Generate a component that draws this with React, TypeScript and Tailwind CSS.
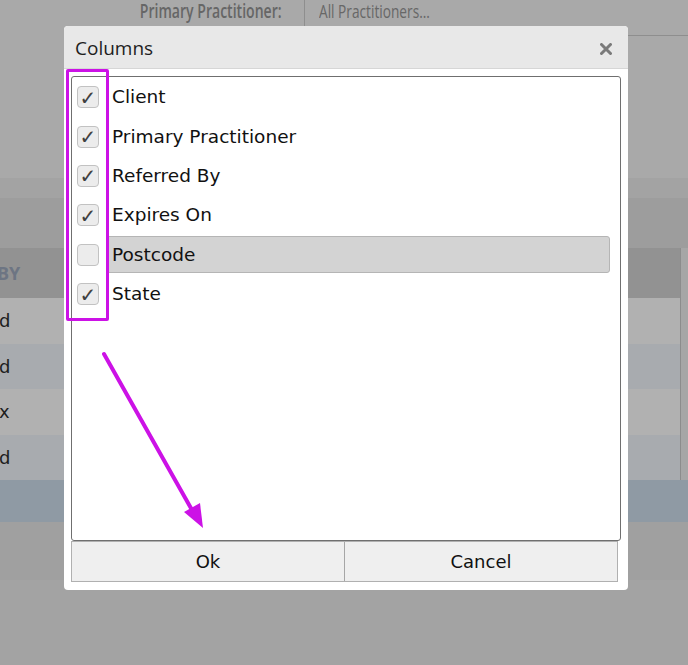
import * as React from "react";

type Column = {
  label: string;
  checked: boolean;
  active?: boolean;
};

const columns: Column[] = [
  { label: "Client", checked: true },
  { label: "Primary Practitioner", checked: true },
  { label: "Referred By", checked: true },
  { label: "Expires On", checked: true },
  { label: "Postcode", checked: false, active: true },
  { label: "State", checked: true },
];

const tableRows = [
  { cell: "d", bg: "bg-[#b1b1b1]" },
  { cell: "d", bg: "bg-[#a8abaf]" },
  { cell: "x", bg: "bg-[#b1b1b1]" },
  { cell: "d", bg: "bg-[#a8abaf]" },
];

function Checkbox({ checked }: { checked: boolean }) {
  return (
    <span className="flex h-[22px] w-[22px] shrink-0 items-center justify-center rounded-[4px] border border-[#c2c2c2] bg-[#ececec] pt-[1px] text-[20px] leading-none text-[#404040]">
      {checked ? "✓" : ""}
    </span>
  );
}

function Backdrop() {
  return (
    <div className="flex h-[665px] w-[688px] flex-col bg-[#a9a9a9] font-['Open_Sans',sans-serif]">
      {/* filter bar */}
      <div className="flex h-[36px] items-stretch">
        <div className="flex w-[304px] items-start justify-end pr-[22px] leading-[22px] text-[19px] font-semibold text-[#666]">
          <span className="origin-right scale-x-[0.74] whitespace-nowrap">Primary Practitioner:</span>
        </div>
        <div className="flex flex-1 items-start border-l border-b border-[#8e8e8e] pl-[14px] leading-[22px] text-[19px] text-[#676767]">
          <span className="origin-left scale-x-[0.72] whitespace-nowrap">All Practitioners...</span>
        </div>
      </div>
      <div className="h-[142px]" />
      <div className="h-[20px] bg-[#a3a3a3]" />
      <div className="h-[50px] bg-[#9d9d9d]" />

      {/* table behind the dialog */}
      <div className="flex">
        <div className="flex-1">
          <div className="flex h-[50px] items-center bg-[#929292] text-[18px] font-bold text-[#6d7583]">
            <span className="-ml-[3px]">BY</span>
          </div>
          {tableRows.map((r, i) => (
            <div
              key={i}
              className={`flex h-[45.5px] items-center text-[18px] text-[#1d1d1d] font-['DejaVu_Sans',sans-serif] ${r.bg}`}
            >
              <span className="-ml-[1px]">{r.cell}</span>
            </div>
          ))}
        </div>
        <div className="w-[8px] border-l border-[#8c8c8c] bg-[#a6a6a6]" />
      </div>
      <div className="h-[42px] bg-[#8f9aa4]" />
      <div className="h-[58px] bg-[#a0a0a0]" />
      <div className="flex-1 bg-[#a3a3a3]" />
    </div>
  );
}

function ColumnsDialog() {
  return (
    <div className="absolute left-[64px] top-[26px] flex h-[564px] w-[564px] flex-col overflow-hidden rounded-[4px] bg-white">
      <div className="flex h-[43px] shrink-0 items-center justify-between border-b border-[#d6d6d6] bg-[#e8e8e8] pl-[11px] pr-[16px]">
        <span className="pt-[2px] font-['Open_Sans',sans-serif] text-[19px] text-[#1e1e1e]">
          Columns
        </span>
        <svg width="12" height="12" viewBox="0 0 12 12" className="mt-[3px]">
          <path
            d="M1.5 1.5 L10.5 10.5 M10.5 1.5 L1.5 10.5"
            stroke="#7a7a7a"
            strokeWidth="3"
            strokeLinecap="round"
          />
        </svg>
      </div>

      <div className="flex flex-1 flex-col px-[7px] pt-[7px] pb-[8px] font-['DejaVu_Sans',sans-serif]">
        <div className="flex h-[465px] flex-col rounded-[3px] border border-[#6f6f6f] bg-white pr-[10px] pl-[5px]">
          {columns.map((c) => (
            <div key={c.label} className="flex h-[39.4px] items-center gap-[7px] pt-[1px]">
              <Checkbox checked={c.checked} />
              <div
                className={`flex h-[37px] flex-1 items-center rounded-[3px] pl-[5px] text-[18.5px] text-[#111] ${
                  c.active ? "border border-[#b5b5b5] bg-[#d3d3d3]" : "border border-transparent"
                }`}
              >
                {c.label}
              </div>
            </div>
          ))}
        </div>

        <div className="mr-[3px] flex h-[41px] border border-[#b0b0b0] bg-[#efefef] text-[18px] text-[#111]">
          <button className="flex flex-1 items-center justify-center border-r border-[#a6a6a6]">
            Ok
          </button>
          <button className="flex flex-1 items-center justify-center">Cancel</button>
        </div>
      </div>
    </div>
  );
}

export default function App() {
  return (
    <div className="relative h-[665px] w-[688px] overflow-hidden">
      <Backdrop />
      <ColumnsDialog />

      {/* annotation: highlight round the checkboxes */}
      <div className="absolute left-[66px] top-[69px] h-[252px] w-[43px] rounded-[2px] border-[3px] border-[#cc12e6]" />

      {/* annotation: arrow to the Ok button */}
      <svg className="absolute left-0 top-0" width="688" height="665" viewBox="0 0 688 665">
        <line x1="104" y1="354" x2="192" y2="510" stroke="#cc12e6" strokeWidth="4" strokeLinecap="round" />
        <polygon points="203,528 184,512 200,503" fill="#cc12e6" />
      </svg>
    </div>
  );
}
